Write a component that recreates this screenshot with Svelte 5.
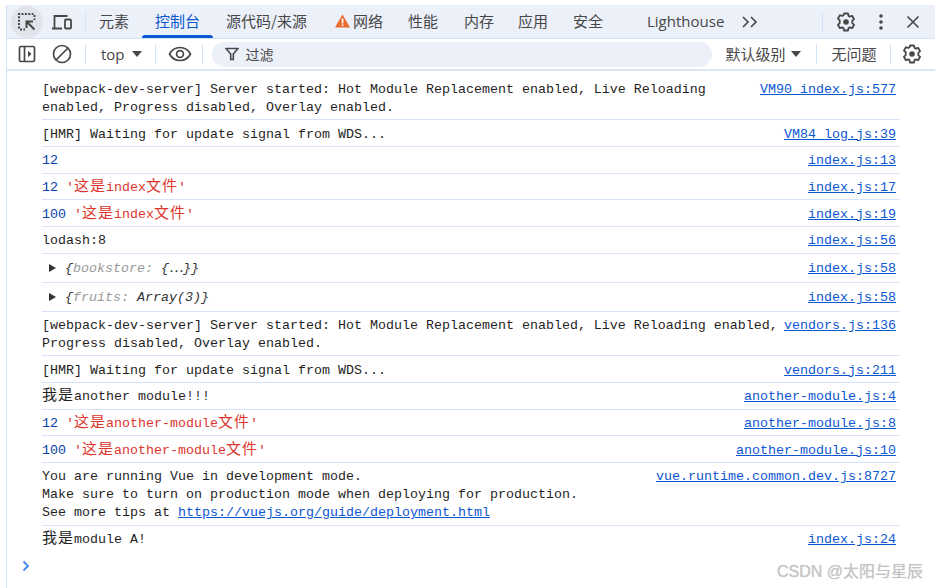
<script>
  const tabs = [
    { t: '元素' }, { t: '控制台', on: true }, { t: '源代码/来源' }, { t: '网络', warn: true },
    { t: '性能' }, { t: '内存' }, { t: '应用' }, { t: '安全' }
  ];
</script>

<div class="page">
  <div class="devtools">
    <header class="bar tabsbar">
      <div class="pick">
        <svg width="20" height="20" viewBox="0 0 20 20" fill="none" stroke="#474747">
          <path d="M2 16.5v-14.5h14.5" stroke-width="2" stroke-dasharray="2 1.4"/>
          <path d="M17.5 3v5M3 17.5h5" stroke-width="2" stroke-dasharray="2 1.4"/>
          <path d="M17.5 17.500L10.500 10.500M9.500 16V9.500H16" stroke-width="2"/>
        </svg>
      </div>
      <svg class="device" width="22" height="18" viewBox="0 0 22 18" fill="none" stroke="#474747" stroke-width="1.8">
        <path d="M3.500 15V3h13M1 15.500h10"/>
        <rect x="14" y="6.500" width="6" height="9" rx="1"/>
      </svg>
      <i class="sep first"></i>
      <nav class="tabs">
        {#each tabs as tab}
          <span class="tab" class:on={tab.on}>
            {#if tab.warn}
              <svg class="warn" width="15" height="14" viewBox="0 0 15 14">
                <path d="M7.500 0.500L15 13.500H0z" fill="#ea6a2c"/>
                <rect x="6.700" y="4.500" width="1.700" height="5" fill="#fff"/>
                <rect x="6.700" y="10.400" width="1.700" height="1.700" fill="#fff"/>
              </svg>
            {/if}
            {tab.t}
          </span>
        {/each}
        <span class="tab light">Lighthouse</span>
      </nav>
      <svg class="more" width="16" height="12" viewBox="0 0 16 12" fill="none" stroke="#474747" stroke-width="1.6">
        <path d="M1 1l5 5-5 5M9 1l5 5-5 5"/>
      </svg>
      <i class="sep end"></i>
      <svg class="gear g1" width="20" height="20" viewBox="0 0 20 20">
        <path fill="none" stroke="#474747" stroke-width="1.8" stroke-linejoin="round" d="M8 1.500h4l.5 2.400 1.300.7 2.300-.8 2 3.400-1.800 1.600v2.400l1.800 1.600-2 3.400-2.300-.8-1.300.7-.5 2.400H8l-.5-2.400-1.300-.7-2.300.8-2-3.400 1.800-1.600V8.200L1.900 6.600l2-3.400 2.300.8 1.300-.7z"/>
        <circle cx="10" cy="10" r="2.800" fill="#474747"/>
      </svg>
      <svg class="dots" width="4" height="16" viewBox="0 0 4 16" fill="#474747">
        <circle cx="2" cy="2" r="1.800"/><circle cx="2" cy="8" r="1.800"/><circle cx="2" cy="14" r="1.800"/>
      </svg>
      <svg class="close" width="14" height="14" viewBox="0 0 14 14" stroke="#474747" stroke-width="1.600">
        <path d="M1.500 1.500l11 11M12.500 1.500l-11 11"/>
      </svg>
    </header>

    <div class="bar tools">
      <svg class="sidebar" width="18" height="18" viewBox="0 0 18 18" fill="none" stroke="#474747" stroke-width="1.700">
        <rect x="1.500" y="1.500" width="15" height="15" rx="1.500"/>
        <path d="M6.500 1.500v15"/>
        <path d="M10 5.800l3.500 3.200-3.500 3.200z" fill="#474747" stroke="none"/>
      </svg>
      <svg class="block" width="20" height="20" viewBox="0 0 20 20" fill="none" stroke="#474747" stroke-width="1.700">
        <circle cx="10" cy="10" r="8.500"/><path d="M4 16L16 4"/>
      </svg>
      <i class="sep s1"></i>
      <span class="top">top</span>
      <i class="caret c1"></i>
      <i class="sep s2"></i>
      <svg class="eye" width="24" height="16" viewBox="0 0 24 16" fill="none" stroke="#474747" stroke-width="1.700">
        <path d="M1.500 8C4 3.500 8 1.500 12 1.500S20 3.500 22.500 8C20 12.500 16 14.500 12 14.500S4 12.500 1.500 8z"/>
        <circle cx="12" cy="8" r="3.400"/>
      </svg>
      <i class="sep s3"></i>
      <div class="filter">
        <svg width="14" height="14" viewBox="0 0 14 14" fill="none" stroke="#474747" stroke-width="1.600">
          <path d="M1 1.500h12L8.300 7v5.500H5.700V7z"/>
        </svg>
        <span>过滤</span>
      </div>
      <span class="level">默认级别</span>
      <i class="caret c2"></i>
      <i class="sep s4"></i>
      <span class="issues">无问题</span>
      <i class="sep s5"></i>
      <svg class="gear g2" width="20" height="20" viewBox="0 0 20 20">
        <path fill="none" stroke="#474747" stroke-width="1.800" stroke-linejoin="round" d="M8 1.500h4l.5 2.400 1.300.7 2.300-.8 2 3.400-1.800 1.600v2.400l1.800 1.600-2 3.400-2.300-.8-1.300.7-.5 2.400H8l-.5-2.400-1.300-.7-2.300.8-2-3.400 1.800-1.600V8.200L1.900 6.600l2-3.400 2.300.8 1.300-.7z"/>
        <circle cx="10" cy="10" r="2.800" fill="#474747"/>
      </svg>
    </div>

    <main class="log">
      <div class="row"><pre>[webpack-dev-server] Server started: Hot Module Replacement enabled, Live Reloading
enabled, Progress disabled, Overlay enabled.</pre><a href="#a">VM90 index.js:577</a></div>
      <div class="row"><pre>[HMR] Waiting for update signal from WDS...</pre><a href="#a">VM84 log.js:39</a></div>
      <div class="row"><pre><b>12</b></pre><a href="#a">index.js:13</a></div>
      <div class="row"><pre><b>12</b> <em>'<u>这是</u>index<u>文件</u>'</em></pre><a href="#a">index.js:17</a></div>
      <div class="row"><pre><b>100</b> <em>'<u>这是</u>index<u>文件</u>'</em></pre><a href="#a">index.js:19</a></div>
      <div class="row"><pre>lodash:8</pre><a href="#a">index.js:56</a></div>
      <div class="row obj"><pre><i class="tri"></i><span class="o">&#123;<span class="k">bookstore:</span> &#123;⋯&#125;&#125;</span></pre><a href="#a">index.js:58</a></div>
      <div class="row obj"><pre><i class="tri"></i><span class="o">&#123;<span class="k">fruits:</span> Array(3)&#125;</span></pre><a href="#a">index.js:58</a></div>
      <div class="row"><pre>[webpack-dev-server] Server started: Hot Module Replacement enabled, Live Reloading enabled,
Progress disabled, Overlay enabled.</pre><a href="#a">vendors.js:136</a></div>
      <div class="row"><pre>[HMR] Waiting for update signal from WDS...</pre><a href="#a">vendors.js:211</a></div>
      <div class="row"><pre><u>我是</u>another module!!!</pre><a href="#a">another-module.js:4</a></div>
      <div class="row"><pre><b>12</b> <em>'<u>这是</u>another-module<u>文件</u>'</em></pre><a href="#a">another-module.js:8</a></div>
      <div class="row"><pre><b>100</b> <em>'<u>这是</u>another-module<u>文件</u>'</em></pre><a href="#a">another-module.js:10</a></div>
      <div class="row"><pre>You are running Vue in development mode.
Make sure to turn on production mode when deploying for production.
See more tips at <a href="#a" class="inline">https://vuejs.org/guide/deployment.html</a></pre><a href="#a">vue.runtime.common.dev.js:8727</a></div>
      <div class="row last"><pre><u>我是</u>module A!</pre><a href="#a">index.js:24</a></div>
      <svg class="prompt" width="8" height="12" viewBox="0 0 8 12" fill="none" stroke="#4a86e8" stroke-width="1.800">
        <path d="M1.500 1.500L6 6l-4.500 4.500"/>
      </svg>
    </main>
  </div>
  <span class="mark">CSDN @太阳与星辰</span>
</div>

<style>
  :global(body) { margin: 0; background: #fff; }
  .page {
    width: 935px; height: 588px; box-sizing: border-box; padding: 5px 0 0 6px;
    overflow: hidden; position: relative;
    font-family: "Noto Sans CJK SC", sans-serif; color: #474747;
  }
  .devtools { height: 583px; border-left: 1px solid #d3e3fd; }
  .bar { display: flex; align-items: center; box-sizing: border-box; }
  .tabsbar { height: 34px; background: #ecf0f9; border-bottom: 1px solid #d3e3fd; }
  .tools { height: 32px; border-bottom: 2px solid #dde6f8; }
  .sep { display: block; width: 1px; flex: none; background: #d3e3fd; height: 20px; }
  .pick {
    width: 32px; height: 32px; border-radius: 50%; background: #e1e4ea; margin-left: 4px;
    display: flex; align-items: center; justify-content: center; flex: none;
  }
  .device { margin-left: 8px; flex: none; }
  .sep.first { margin-left: 12px; }
  .tabs { display: flex; height: 33px; align-items: stretch; }
  .tab {
    display: flex; align-items: center; padding: 0 13px; font-size: 15px;
    line-height: 20px; white-space: nowrap; box-sizing: border-box; color: #474747;
    padding-bottom: 1px; flex: none;
  }
  .tab.on { color: #0b57d0; position: relative; }
  .tab.on::after {
    content: ""; position: absolute; left: 0; right: 0; bottom: 0; height: 3px;
    background: #0b57d0; border-radius: 3px 3px 0 0;
  }
  .warn { margin-right: 3px; margin-left: 2px; }
  .tab:nth-child(5) { margin-left: -1px; }
  .tab:nth-child(7) { margin-left: -2px; }
  .tab:nth-child(8) { margin-left: -1px; }
  .tab.light { margin-left: 18px; font-family: "Open Sans", sans-serif; font-size: 15px; }
  .more { margin-left: 5px; flex: none; }
  .sep.end { margin-left: 64px; height: 20px; }
  .g1 { margin-left: 13px; flex: none; }
  .dots { margin-left: 23px; flex: none; }
  .close { margin-left: 23px; flex: none; }

  .sidebar { margin-left: 11px; flex: none; }
  .block { margin-left: 16px; flex: none; }
  .s1 { margin-left: 13px; }
  .top { margin-left: 15px; font: 15px/20px "Open Sans", sans-serif; }
  .caret {
    display: block; flex: none; width: 0; height: 0; border: 5px solid transparent;
    border-top: 6px solid #474747; border-bottom: 0;
  }
  .c1 { margin-left: 7px; }
  .s2 { margin-left: 13px; }
  .eye { margin-left: 12px; flex: none; }
  .s3 { margin-left: 10px; }
  .filter {
    margin-left: 9px; width: 500px; height: 25px; flex: none; border-radius: 13px;
    background: #ecf0f9; display: flex; align-items: center; padding-left: 13px;
    box-sizing: border-box; gap: 7px; font-size: 14px;
  }
  .level { margin-left: 14px; font-size: 15px; line-height: 20px; }
  .c2 { margin-left: 5px; }
  .s4 { margin-left: 15px; }
  .issues { margin-left: 15px; font-size: 15px; line-height: 20px; }
  .s5 { margin-left: 13px; }
  .g2 { margin-left: 11px; flex: none; }

  .log { padding-top: 4.5px; width: 893px; position: relative; }
  .row {
    margin-left: 35px; padding: 5.35px 4px 2.35px 0; border-bottom: 1px solid #d6e2fa;
    display: flex; justify-content: space-between; align-items: flex-start;
    font: 13.33px/18px "Liberation Mono", "Noto Sans CJK SC", monospace; color: #1f1f1f;
  }
  .row.obj { padding: 6.5px 4px 3.5px 0; }
  .row.last { border-bottom: 0; }
  pre { margin: 0; font: inherit; white-space: pre; }
  .row a { color: #0b57d0; text-decoration: underline; }
  b { font-weight: 400; color: #0842a8; }
  em { font-style: normal; color: #dc362e; }
  u {
    text-decoration: none; font-size: 15px; letter-spacing: 1px; line-height: 0;
    font-family: "Noto Sans CJK SC", sans-serif;
  }
  .tri {
    display: inline-block; width: 0; height: 0; margin: 0 9px 0 7px;
    border: 4px solid transparent; border-left: 7px solid #333; border-right: 0;
  }
  .o { font-style: italic; color: #333; }
  .k { color: #999; }
  .prompt { position: absolute; left: 15px; top: 489px; }
  .mark {
    position: absolute; left: 777px; top: 561px; font-size: 16px; line-height: 22px;
    color: #c4c4c4; font-family: "Liberation Sans", "Noto Sans CJK SC", sans-serif;
    text-shadow: 0 0 1px #d0d0d0;
  }
</style>
